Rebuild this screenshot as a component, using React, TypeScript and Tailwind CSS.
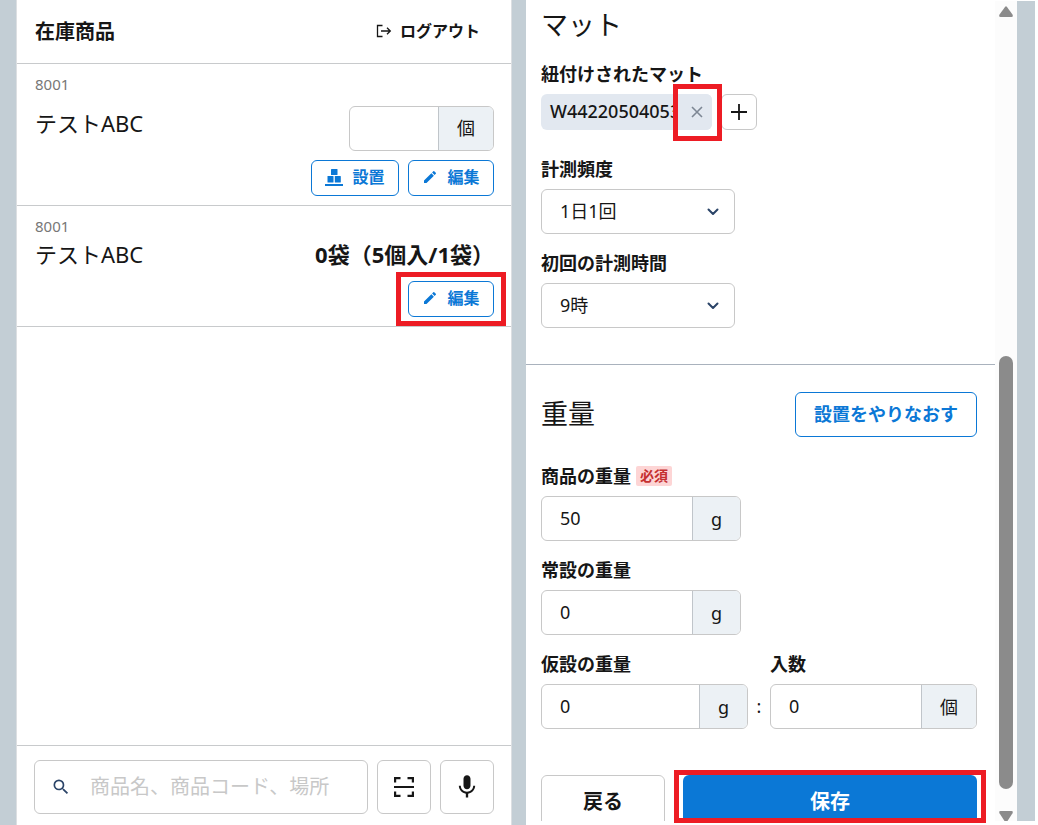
import { useState } from "react";
import { MdEdit, MdMic, MdSearch } from "react-icons/md";

const LogoutIcon = () => (
  <svg width="16" height="14" viewBox="0 0 16 14" fill="none" stroke="currentColor" strokeWidth="1.3" aria-hidden="true">
    <path d="M6.5 1.5H1.5v11h5M5 7h9.3M11 3.8 14.3 7 11 10.2" />
  </svg>
);

const BoxesIcon = () => (
  <svg width="18" height="18" viewBox="0 0 18 18" fill="currentColor" aria-hidden="true">
    <rect x="6" y="1" width="6.5" height="6" rx="0.6" />
    <rect x="2.5" y="8" width="6" height="6.5" rx="0.6" />
    <rect x="9.8" y="8" width="6" height="6.5" rx="0.6" />
    <rect x="0" y="16" width="18" height="2" />
  </svg>
);

const ScanIcon = () => (
  <svg width="22" height="22" viewBox="0 0 22 22" fill="none" stroke="currentColor" strokeWidth="2.2" aria-hidden="true">
    <path d="M2.1 6.5V2.1H7.5M14.5 2.1h5.4v4.4M19.9 15.5v4.4h-5.4M7.5 19.9H2.1v-4.4M1 11h20" />
  </svg>
);

const ChevronIcon = () => (
  <svg className="pointer-events-none absolute top-1/2 right-4 -translate-y-1/2" width="12" height="8" viewBox="0 0 12 8" fill="none" stroke="#2b4468" strokeWidth="2" strokeLinecap="round" strokeLinejoin="round" aria-hidden="true">
    <path d="M1.5 1.5 6 6l4.5-4.5" />
  </svg>
);

const EditButton = () => (
  <button type="button" className="flex h-9 w-[86px] items-center justify-center gap-[9px] rounded-md border border-[#0b78d6] bg-white pb-0.5 text-base font-bold text-[#0b78d6]">
    <MdEdit size={16} />
    編集
  </button>
);

type SelectFieldProps = { id: string; label: string; options: string[] };

function SelectField({ id, label, options }: SelectFieldProps) {
  return (
    <div>
      <label htmlFor={id} className="mb-[7px] block text-lg leading-[26px] font-bold">{label}</label>
      <div className="relative w-[194px]">
        <select id={id} className="h-[45px] w-full appearance-none rounded-md border border-[#c8c8c8] bg-white px-[18px] pb-0.5 text-lg">
          {options.map((o) => (
            <option key={o}>{o}</option>
          ))}
        </select>
        <ChevronIcon />
      </div>
    </div>
  );
}

type UnitFieldProps = { id: string; label: string; unit: string; initial: string; required?: boolean };

function UnitField({ id, label, unit, initial, required }: UnitFieldProps) {
  const [value, setValue] = useState(initial);

  return (
    <div>
      <div className="mb-[7px] flex h-[26px] items-center gap-[5px]">
        <label htmlFor={id} className="text-lg leading-[26px] font-bold">{label}</label>
        {required && <span className="rounded-xs bg-[#fdd5d5] px-1 text-sm leading-5 font-bold text-[#c53030]">必須</span>}
      </div>
      <div className="flex h-[45px] overflow-hidden rounded-md border border-[#c8c8c8]">
        <input id={id} value={value} onChange={(e) => setValue(e.target.value)} className="w-0 flex-1 px-[18px] pb-0.5 text-lg outline-none" />
        <span className="flex items-center border-l border-[#c0c5ca] bg-[#ecf1f5] px-[18px] text-lg">{unit}</span>
      </div>
    </div>
  );
}

function StockPanel() {
  return (
    <section className="flex min-w-0 flex-col border-x border-[#dcdfe2] bg-white">
      <header className="flex h-16 shrink-0 items-center justify-between border-b border-[#c8cacc] pr-[31px] pl-[18px]">
        <h1 className="text-xl font-bold">在庫商品</h1>
        <button type="button" className="flex items-center gap-2 pb-0.5 text-base font-bold">
          <LogoutIcon />
          ログアウト
        </button>
      </header>

      <ul className="flex-1">
        <li className="border-b border-[#c8cacc] pt-2 pr-[17px] pb-[9px] pl-[18px]">
          <p className="text-[15px] leading-6 text-[#777]">8001</p>
          <div className="mt-[10px] flex items-start justify-between">
            <span className="text-[22px] leading-[34px]">テストABC</span>
            <div className="flex h-[45px] w-[145px] overflow-hidden rounded-md border border-[#c8c8c8]">
              <input aria-label="個数" className="w-0 flex-1 px-4 text-lg outline-none" />
              <span className="flex items-center border-l border-[#c0c5ca] bg-[#ecf1f5] px-[18px] pb-0.5 text-lg">個</span>
            </div>
          </div>
          <div className="mt-[9px] flex justify-end gap-[9px]">
            <button type="button" className="flex h-9 w-[88px] items-center justify-center gap-[9px] rounded-md border border-[#0b78d6] bg-white pb-0.5 text-base font-bold text-[#0b78d6]">
              <BoxesIcon />
              設置
            </button>
            <EditButton />
          </div>
        </li>
        <li className="border-b border-[#c8cacc] pt-2 pr-[17px] pb-[9px] pl-[18px]">
          <p className="text-[15px] leading-6 text-[#777]">8001</p>
          <div className="mt-0.5 flex h-8 items-center justify-between pb-1 text-[22px]">
            <span>テストABC</span>
            <span className="font-bold">0袋（5個入/1袋）</span>
          </div>
          <div className="mt-[9px] flex justify-end">
            <div className="relative">
              <EditButton />
              <div className="pointer-events-none absolute -inset-x-3 -top-[9px] -bottom-[9px] border-[5px] border-[#ed1c24]" />
            </div>
          </div>
        </li>
      </ul>

      <footer className="flex gap-[9px] border-t border-[#c8cacc] pt-[14px] pr-[17px] pb-[11px] pl-[17px]">
        <label className="flex h-[54px] min-w-0 flex-1 items-center rounded-md border border-[#c8c8c8] pb-px pl-4">
          <MdSearch size={20} color="#2b4468" className="shrink-0" />
          <input type="search" aria-label="商品を検索" placeholder="商品名、商品コード、場所" className="ml-[19px] w-0 flex-1 text-xl outline-none placeholder:text-[#c8c8c8]" />
        </label>
        <button type="button" aria-label="スキャン" className="flex size-[54px] items-center justify-center rounded-md border border-[#c8c8c8]">
          <ScanIcon />
        </button>
        <button type="button" aria-label="音声入力" className="flex size-[54px] items-center justify-center rounded-md border border-[#c8c8c8]">
          <MdMic size={28} />
        </button>
      </footer>
    </section>
  );
}

function ScrollTrack() {
  return (
    <div className="flex w-[22px] shrink-0 flex-col items-center bg-[#fcfcfc] pt-[5px]" aria-hidden="true">
      <svg width="14" height="11" viewBox="0 0 14 11" fill="#8b8b8b">
        <path d="M6 1Q7-.3 8 1l5.5 7.6Q14.5 11 12.500 11h-11Q-.5 11 .5 8.600z" />
      </svg>
      <div className="grow-[339]" />
      <div className="w-[14px] grow-[433] rounded-full bg-[#8b8b8b]" />
      <div className="grow-[22]" />
      <svg width="14" height="10" viewBox="0 0 14 10" fill="#8b8b8b">
        <path d="M1.500 0h11Q14.500 0 13.500 2.200L8.500 10h-3L.5 2.200Q-.5 0 1.500 0z" />
      </svg>
    </div>
  );
}

function MatPanel() {
  return (
    <section className="flex min-w-0 bg-white">
      <div className="min-w-0 flex-1">
        <div className="border-b border-[#a9b2bd] pt-1.5 pr-[18px] pb-9 pl-[15px]">
          <h2 className="mb-[18px] text-[27px] leading-9">マット</h2>
          <h3 className="mb-[7px] text-lg leading-[26px] font-bold">紐付けされたマット</h3>
          <div className="mb-[26px] flex gap-[9px]">
            <div className="flex h-9 w-[171px] items-center rounded-md bg-[#e2e8f0] pl-[9px]">
              <span className="min-w-0 flex-1 pb-0.5 text-lg font-medium">W44220504053</span>
              <div className="relative">
                <button type="button" aria-label="マットを外す" className="flex h-9 w-[35px] items-center justify-center rounded-r-md bg-[#e2e8f0] pl-1">
                  <svg width="12" height="12" viewBox="0 0 12 12" stroke="#7d8794" strokeWidth="1.6" aria-hidden="true">
                    <path d="m1 1 10 10M11 1 1 11" />
                  </svg>
                </button>
                <div className="pointer-events-none absolute -top-[10px] -right-[10px] -bottom-[11px] -left-1 z-10 border-[5px] border-[#ed1c24]" />
              </div>
            </div>
            <button type="button" aria-label="マットを追加" className="flex size-9 items-center justify-center rounded-md border border-[#c8c8c8]">
              <svg width="16" height="16" viewBox="0 0 16 16" stroke="currentColor" strokeWidth="1.8" aria-hidden="true">
                <path d="M8 0v16M0 8h16" />
              </svg>
            </button>
          </div>
          <div className="flex flex-col gap-4">
            <SelectField id="frequency" label="計測頻度" options={["1日1回", "1日2回"]} />
            <SelectField id="first-time" label="初回の計測時間" options={["9時", "10時", "11時"]} />
          </div>
        </div>

        <div className="pt-[27px] pr-[18px] pl-[15px]">
          <div className="mb-[26px] flex items-center justify-between">
            <h2 className="text-[27px]">重量</h2>
            <button type="button" className="h-[45px] rounded-md border border-[#0b78d6] px-[18px] pb-0.5 text-lg font-bold text-[#0b78d6]">設置をやりなおす</button>
          </div>
          <div className="flex flex-col gap-4">
            <div className="w-[200px]">
              <UnitField id="item-weight" label="商品の重量" unit="g" initial="50" required />
            </div>
            <div className="w-[200px]">
              <UnitField id="fixed-weight" label="常設の重量" unit="g" initial="0" />
            </div>
            <div className="grid grid-cols-[minmax(0,1fr)_22px_minmax(0,1fr)] items-end">
              <UnitField id="temp-weight" label="仮設の重量" unit="g" initial="0" />
              <span className="text-center text-lg leading-[45px]">:</span>
              <UnitField id="quantity" label="入数" unit="個" initial="0" />
            </div>
          </div>
          <div className="mt-[46px] flex h-[46px] gap-[18px]">
            <div className="w-[124px] overflow-hidden">
              <button type="button" className="h-[54px] w-full rounded-md border border-[#c8c8c8] text-xl font-bold">戻る</button>
            </div>
            <div className="relative flex-1">
              <div className="h-full overflow-hidden">
                <button type="button" className="h-[54px] w-full rounded-md bg-[#0b78d6] text-xl font-bold text-white">保存</button>
              </div>
              <div className="pointer-events-none absolute -inset-x-[9px] -top-[5px] -bottom-[2px] border-[5px] border-[#ed1c24]" />
            </div>
          </div>
        </div>
      </div>
      <ScrollTrack />
    </section>
  );
}

export default function App() {
  return (
    <div className="grid min-h-screen grid-cols-[minmax(0,512fr)_minmax(0,526fr)] bg-white font-['Noto_Sans','Noto_Sans_CJK_JP',sans-serif] text-[#161616]">
      <div className="grid grid-cols-[16px_minmax(0,1fr)] bg-[#c3ced5]">
        <div />
        <StockPanel />
      </div>
      <div className="grid grid-cols-[14px_minmax(0,1fr)_18px_3px]">
        <div className="bg-[#c3ced5]" />
        <div className="grid pt-px pb-1">
          <MatPanel />
        </div>
        <div className="mt-px mb-1 bg-[#c3ced5]" />
      </div>
    </div>
  );
}
